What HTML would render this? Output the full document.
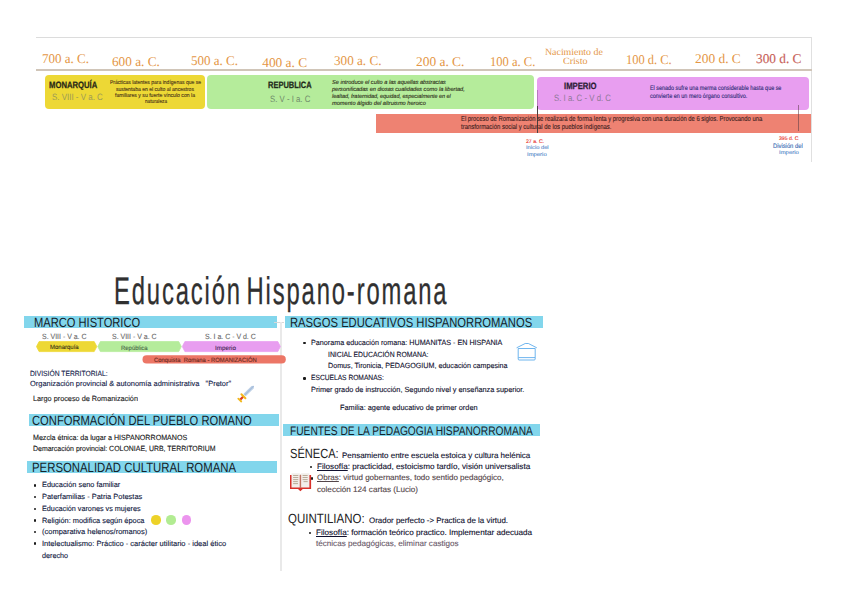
<!DOCTYPE html>
<html lang="es"><head><meta charset="utf-8"><title>Educación Hispano-romana</title>
<style>
html,body{margin:0;padding:0;background:#fff;}
body{width:848px;height:599px;position:relative;overflow:hidden;font-family:"Liberation Sans",sans-serif;color:#222;}
.a{position:absolute;}
.x{position:absolute;white-space:nowrap;transform-origin:0 0;text-rendering:geometricPrecision;}
.bl{position:absolute;width:2.4px;height:2.5px;background:#1a1a1a;border-radius:1px;}
</style></head><body>
<!-- timeline frame -->
<div class="a" style="left:36px;top:37px;width:776px;height:1px;background:#dcdcdc"></div>
<div class="a" style="left:811px;top:37px;width:1px;height:125px;background:#e0e0e0"></div>
<div class="a" style="left:36px;top:69px;width:776px;height:2px;background:#d0c5b8"></div>
<!-- period boxes -->
<div class="a" style="left:44.800px;top:75.200px;width:160px;height:33.600px;border-radius:4px;background:#edd835"></div>
<div class="a" style="left:207.200px;top:75.200px;width:326.800px;height:33.500px;border-radius:4px;background:#b5ec9b"></div>
<div class="a" style="left:536.700px;top:76.700px;width:272.700px;height:33px;border-radius:4px;background:#e89ef0"></div>
<div class="a" style="left:375.800px;top:113.800px;width:435.500px;height:18.800px;background:#ee8272"></div>
<div class="a" style="left:537px;top:90px;width:1px;height:16px;background:rgba(60,30,70,.28)"></div>
<div class="a" style="left:537px;top:106px;width:1px;height:26.500px;background:#4a4040"></div>
<div class="a" style="left:797.700px;top:105px;width:1px;height:26px;background:rgba(90,60,70,.55)"></div>

<!-- section bars -->
<div class="a" style="left:24px;top:316.200px;width:252.700px;height:11.800px;background:#82d6ec"></div>
<div class="a" style="left:29.200px;top:414.200px;width:249.500px;height:11.600px;background:#82d6ec"></div>
<div class="a" style="left:27px;top:461.200px;width:249.700px;height:11.600px;background:#82d6ec"></div>
<div class="a" style="left:285px;top:316.200px;width:257.500px;height:11.600px;background:#82d6ec"></div>
<div class="a" style="left:283.300px;top:424.200px;width:256.400px;height:11.600px;background:#82d6ec"></div>
<!-- divider -->
<div class="a" style="left:274px;top:321.500px;width:10px;height:1px;background:#d8d8d8"></div>
<div class="a" style="left:280.100px;top:321.500px;width:2.100px;height:249px;background:#e9e9e9"></div>

<!-- chevrons -->
<svg class="a" style="left:30px;top:338px" width="262" height="30" viewBox="30 338 262 30">
<path d="M39.1 341.6 H94.2 L96.8 346.6 L94.2 351.6 H39.1 L36.5 346.6Z" fill="#edd835" stroke="#edd835" stroke-width=".8" stroke-linejoin="round"/>
<path d="M100.4 341.6 H178.7 L181.3 346.6 L178.7 351.6 H100.4 L97.8 346.6Z" fill="#b5ec9b" stroke="#b5ec9b" stroke-width=".8" stroke-linejoin="round"/>
<path d="M184.9 341.6 H277.8 L280.4 346.6 L277.8 351.6 H184.9 L182.3 346.6Z" fill="#e89ef0" stroke="#e89ef0" stroke-width=".8" stroke-linejoin="round"/>
<rect x="142.500" y="355.300" width="143.300" height="8.200" rx="4.100" fill="#ec7666"/>
</svg>

<!-- sword -->
<svg class="a" style="left:234px;top:382px" width="24" height="23" viewBox="234 382 24 23">
<path d="M243.300 394 L251.500 386 L253.900 385.700 L253.900 388.200 L245.700 396.300Z" fill="#bccfe6"/>
<path d="M244.500 395.200 L253.600 386" stroke="#94aed0" stroke-width=".8"/>
<path d="M243.600 396.300 L239.900 400" stroke="#dc3a22" stroke-width="2.300"/>
<path d="M241.400 394.300 L245.400 398.300" stroke="#f2b81e" stroke-width="2" stroke-linecap="round"/>
<path d="M238.300 398.700 L241.300 401.500" stroke="#f2b81e" stroke-width="1.800" stroke-linecap="round"/>
</svg>

<!-- dots -->
<div class="a" style="left:150.800px;top:515.300px;width:10.500px;height:9.400px;border-radius:50%;background:#edd228"></div>
<div class="a" style="left:166.200px;top:515.300px;width:10.200px;height:9.400px;border-radius:50%;background:#b2ec92"></div>
<div class="a" style="left:182px;top:515.300px;width:9.400px;height:9.400px;border-radius:50%;background:#ec94ee"></div>

<!-- bullets -->
<div class="bl" style="left:33.900px;top:484px"></div>
<div class="bl" style="left:33.900px;top:495.600px"></div>
<div class="bl" style="left:33.900px;top:507.500px"></div>
<div class="bl" style="left:33.900px;top:519px"></div>
<div class="bl" style="left:33.900px;top:530.800px"></div>
<div class="bl" style="left:33.900px;top:542.300px"></div>
<div class="bl" style="left:303.300px;top:341.800px"></div>
<div class="bl" style="left:303.300px;top:377px"></div>
<div class="bl" style="left:309.600px;top:465.800px"></div>
<div class="bl" style="left:309px;top:531.800px"></div>
<div class="bl" style="left:310.600px;top:477px"></div>

<!-- house -->
<svg class="a" style="left:515px;top:341px" width="24" height="21" viewBox="515 341 24 21">
<path d="M516.600 347.800 L525.200 343.500 H528.400 L536.800 347.800 M518.200 348.500 V359 Q518.200 360 519.200 360 H534.200 Q535.200 360 535.200 359 V348.500 M518.200 348.500 H535.200 M518.500 357.600 H535" fill="none" stroke="#4aa2ea" stroke-width=".8"/>
</svg>

<!-- book -->
<svg class="a" style="left:288px;top:471px" width="26" height="22" viewBox="288 471 26 22">
<path d="M290 474.900 H311.100 V489 H302.800 L300.400 491.300 L298 489 H290Z" fill="#d8302a"/>
<path d="M291.500 473.200 H299.800 V487.400 H291.500Z M301.100 473.200 H309.400 V487.400 H301.100Z" fill="#f2eeea"/>
<path d="M300.450 474.500 V488" stroke="#b09a80" stroke-width=".7"/>
<path d="M293.100 475.500H298.300M293.100 477.500H298.300M293.100 479.600H298.300M293.100 481.600H297.800M293.100 483.600H298M302.600 475.500H307.700M302.600 477.500H307.700M302.600 479.600H307.700M303.500 481.600H307.700" stroke="#b4a48e" stroke-width=".9"/>
</svg>

<div class="x" style="left:41.7px;top:50px;font-size:13.4px;line-height:17px;color:#e49645;font-family:'Liberation Serif',serif;transform:scaleX(0.972);">700 a. C.</div>
<div class="x" style="left:112.2px;top:53px;font-size:13.4px;line-height:17px;color:#e49645;font-family:'Liberation Serif',serif;transform:scaleX(0.988);">600 a. C.</div>
<div class="x" style="left:190.8px;top:52px;font-size:13.4px;line-height:17px;color:#e49645;font-family:'Liberation Serif',serif;transform:scaleX(0.972);">500 a. C.</div>
<div class="x" style="left:262.2px;top:54px;font-size:13.4px;line-height:17px;color:#e49645;font-family:'Liberation Serif',serif;transform:scaleX(1.000);">400 a. C</div>
<div class="x" style="left:334.2px;top:52px;font-size:13.4px;line-height:17px;color:#e49645;font-family:'Liberation Serif',serif;transform:scaleX(0.982);">300 a. C.</div>
<div class="x" style="left:415.8px;top:53px;font-size:13.4px;line-height:17px;color:#e49645;font-family:'Liberation Serif',serif;transform:scaleX(1.001);">200 a. C.</div>
<div class="x" style="left:489.7px;top:53px;font-size:13.4px;line-height:17px;color:#e49645;font-family:'Liberation Serif',serif;transform:scaleX(0.937);">100 a. C.</div>
<div class="x" style="left:544.7px;top:46px;font-size:9.6px;line-height:13px;color:#e49645;font-family:'Liberation Serif',serif;transform:scaleX(1.028);">Nacimiento de</div>
<div class="x" style="left:562.5px;top:55px;font-size:9.6px;line-height:13px;color:#e49645;font-family:'Liberation Serif',serif;transform:scaleX(1.044);">Cristo</div>
<div class="x" style="left:626.3px;top:51px;font-size:13.4px;line-height:17px;color:#e49645;font-family:'Liberation Serif',serif;transform:scaleX(0.931);">100 d. C.</div>
<div class="x" style="left:694.7px;top:50px;font-size:13.4px;line-height:17px;color:#e49645;font-family:'Liberation Serif',serif;transform:scaleX(1.001);">200 d. C</div>
<div class="x" style="left:755.8px;top:50px;font-size:13.4px;line-height:17px;color:#c8625a;font-family:'Liberation Serif',serif;transform:scaleX(0.994);-webkit-text-stroke:.15px;">300 d. C</div>
<div class="x" style="left:49.2px;top:79px;font-size:9.2px;line-height:13px;color:#2a2a18;font-weight:bold;transform:scaleX(0.837);-webkit-text-stroke:.25px;">MONARQUÍA</div>
<div class="x" style="left:52.0px;top:91px;font-size:9.2px;line-height:13px;color:#9c9a58;transform:scaleX(0.865);">S. VIII - V a. C</div>
<div class="x" style="left:268.3px;top:79px;font-size:9.2px;line-height:13px;color:#1f2a1a;font-weight:bold;transform:scaleX(0.815);-webkit-text-stroke:.25px;">REPUBLICA</div>
<div class="x" style="left:269.7px;top:93px;font-size:9.2px;line-height:13px;color:#6f8a6a;transform:scaleX(0.849);">S. V - I a. C</div>
<div class="x" style="left:563.8px;top:80px;font-size:9.2px;line-height:13px;color:#2c1c36;font-weight:bold;transform:scaleX(0.838);-webkit-text-stroke:.25px;">IMPERIO</div>
<div class="x" style="left:553.8px;top:92px;font-size:9.2px;line-height:13px;color:#8e7896;transform:scaleX(0.852);">S. I a. C - V d. C</div>
<div class="x" style="-webkit-text-stroke:.12px;left:109.6px;top:79px;font-size:5.6px;line-height:9px;color:#4a3418;transform:scaleX(0.901);">Prácticas latentes para indígenas que se</div>
<div class="x" style="-webkit-text-stroke:.12px;left:116.0px;top:86px;font-size:5.6px;line-height:9px;color:#4a3418;transform:scaleX(0.905);">sustentaba en el culto al ancestros</div>
<div class="x" style="-webkit-text-stroke:.12px;left:115.0px;top:92px;font-size:5.6px;line-height:9px;color:#4a3418;transform:scaleX(0.916);">familiares y su fuerte vínculo con la</div>
<div class="x" style="-webkit-text-stroke:.12px;left:144.5px;top:98px;font-size:5.6px;line-height:9px;color:#4a3418;transform:scaleX(0.842);">naturaleza</div>
<div class="x" style="-webkit-text-stroke:.12px;left:332.2px;top:79px;font-size:5.8px;line-height:9px;color:#2c2c18;transform:scaleX(0.965);font-style:italic;">Se introduce el culto a las aquellas abstractas</div>
<div class="x" style="-webkit-text-stroke:.12px;left:332.2px;top:86px;font-size:5.8px;line-height:9px;color:#2c2c18;transform:scaleX(0.967);font-style:italic;">personificadas en diosas cualidades como la libertad,</div>
<div class="x" style="-webkit-text-stroke:.12px;left:332.2px;top:93px;font-size:5.8px;line-height:9px;color:#2c2c18;transform:scaleX(0.938);font-style:italic;">lealtad, fraternidad, equidad, especialmente en el</div>
<div class="x" style="-webkit-text-stroke:.12px;left:332.2px;top:100px;font-size:5.8px;line-height:9px;color:#2c2c18;transform:scaleX(0.974);font-style:italic;">momento álgido del altruismo heroico</div>
<div class="x" style="-webkit-text-stroke:.12px;left:650.3px;top:84px;font-size:6.5px;line-height:10px;color:#2c2a74;transform:scaleX(0.834);">El senado sufre una merma considerable hasta que se</div>
<div class="x" style="-webkit-text-stroke:.12px;left:650.3px;top:92px;font-size:6.5px;line-height:10px;color:#2c2a74;transform:scaleX(0.841);">convierte en un mero órgano consultivo.</div>
<div class="x" style="-webkit-text-stroke:.12px;left:460.8px;top:113px;font-size:7.2px;line-height:11px;color:#3c2020;transform:scaleX(0.815);">El proceso de Romanización se realizará de forma lenta y progresiva con una duración de 6 siglos. Provocando una</div>
<div class="x" style="-webkit-text-stroke:.12px;left:460.8px;top:121px;font-size:7.2px;line-height:11px;color:#3c2020;transform:scaleX(0.826);">transformación social y cultural de los pueblos indígenas.</div>
<div class="x" style="-webkit-text-stroke:.12px;left:526.3px;top:138px;font-size:5.2px;line-height:8px;color:#e8332a;transform:scaleX(0.996);">27 a. C.</div>
<div class="x" style="-webkit-text-stroke:.12px;left:526.3px;top:144px;font-size:5.2px;line-height:8px;color:#5a8ccc;transform:scaleX(1.103);">Inicio del</div>
<div class="x" style="-webkit-text-stroke:.12px;left:526.5px;top:151px;font-size:5.2px;line-height:8px;color:#5a8ccc;transform:scaleX(1.138);">Imperio</div>
<div class="x" style="-webkit-text-stroke:.12px;left:778.8px;top:135px;font-size:5.2px;line-height:8px;color:#e8332a;transform:scaleX(0.989);">395 d. C</div>
<div class="x" style="-webkit-text-stroke:.12px;left:773.4px;top:142px;font-size:6.4px;line-height:10px;color:#3a6cb4;transform:scaleX(0.909);">División del</div>
<div class="x" style="-webkit-text-stroke:.12px;left:778.8px;top:149px;font-size:5.2px;line-height:8px;color:#5a8ccc;transform:scaleX(1.144);">Imperio</div>
<div class="x" style="left:113.7px;top:269px;font-size:38.6px;line-height:46px;color:#303030;transform:scaleX(0.617);letter-spacing:3px;word-spacing:-6px;-webkit-text-stroke:.3px #303030;">Educación Hispano-romana</div>
<div class="x" style="left:34.2px;top:314px;font-size:13.4px;line-height:17px;color:#15222a;transform:scaleX(0.831);">MARCO HISTORICO</div>
<div class="x" style="left:32.2px;top:412px;font-size:13.4px;line-height:17px;color:#15222a;transform:scaleX(0.836);">CONFORMACIÓN DEL PUEBLO ROMANO</div>
<div class="x" style="left:31.8px;top:459px;font-size:13.4px;line-height:17px;color:#15222a;transform:scaleX(0.849);">PERSONALIDAD CULTURAL ROMANA</div>
<div class="x" style="left:290.0px;top:314px;font-size:13.4px;line-height:17px;color:#15222a;transform:scaleX(0.838);">RASGOS EDUCATIVOS HISPANORROMANOS</div>
<div class="x" style="left:289.6px;top:423px;font-size:12.4px;line-height:16px;color:#15222a;transform:scaleX(0.823);">FUENTES DE LA PEDAGOGIA HISPANORROMANA</div>
<div class="x" style="left:289.6px;top:445px;font-size:13.3px;line-height:17px;color:#222;transform:scaleX(0.834);">SÉNECA:</div>
<div class="x" style="left:288.3px;top:510px;font-size:13.3px;line-height:17px;color:#222;transform:scaleX(0.865);">QUINTILIANO:</div>
<div class="x" style="-webkit-text-stroke:.12px;left:41.7px;top:331px;font-size:7.5px;line-height:11px;color:#6a6a6a;transform:scaleX(0.928);">S. VIII - V a. C</div>
<div class="x" style="-webkit-text-stroke:.12px;left:111.7px;top:331px;font-size:7.5px;line-height:11px;color:#6a6a6a;transform:scaleX(0.930);">S. VIII - V a. C</div>
<div class="x" style="-webkit-text-stroke:.12px;left:205.0px;top:331px;font-size:7.5px;line-height:11px;color:#6a6a6a;transform:scaleX(0.930);">S. I a. C - V d. C</div>
<div class="x" style="-webkit-text-stroke:.12px;left:50.0px;top:343px;font-size:6.2px;line-height:9px;color:#3a3418;transform:scaleX(0.970);">Monarquía</div>
<div class="x" style="-webkit-text-stroke:.12px;left:120.5px;top:344px;font-size:6.2px;line-height:9px;color:#4a6a4a;transform:scaleX(0.963);">República</div>
<div class="x" style="-webkit-text-stroke:.12px;left:215.0px;top:344px;font-size:6.2px;line-height:9px;color:#4a2a5a;transform:scaleX(1.017);">Imperio</div>
<div class="x" style="-webkit-text-stroke:.12px;left:154.0px;top:356px;font-size:6.2px;line-height:9px;color:#6a2a22;transform:scaleX(0.948);">Conquista&nbsp; Romana - ROMANIZACIÓN</div>
<div class="x" style="-webkit-text-stroke:.12px;left:30.0px;top:368px;font-size:7.5px;line-height:11px;color:#141c4a;transform:scaleX(0.897);">DIVISIÓN TERRITORIAL:</div>
<div class="x" style="-webkit-text-stroke:.12px;left:30.0px;top:378px;font-size:7.5px;line-height:11px;color:#141c4a;transform:scaleX(0.991);">Organización provincial &amp; autonomía administrativa&nbsp; &nbsp;"Pretor"</div>
<div class="x" style="-webkit-text-stroke:.12px;left:33.0px;top:393px;font-size:7.5px;line-height:11px;color:#222;transform:scaleX(0.972);">Largo proceso de Romanización</div>
<div class="x" style="-webkit-text-stroke:.12px;left:33.3px;top:432px;font-size:7.5px;line-height:11px;color:#161616;transform:scaleX(0.947);">Mezcla étnica: da lugar a HISPANORROMANOS</div>
<div class="x" style="-webkit-text-stroke:.12px;left:33.3px;top:443px;font-size:7.5px;line-height:11px;color:#161616;transform:scaleX(0.927);">Demarcación provincial: COLONIAE, URB, TERRITORIUM</div>
<div class="x" style="-webkit-text-stroke:.12px;left:41.7px;top:479px;font-size:7.5px;line-height:11px;color:#10183e;transform:scaleX(0.983);">Educación seno familiar</div>
<div class="x" style="-webkit-text-stroke:.12px;left:41.7px;top:491px;font-size:7.5px;line-height:11px;color:#10183e;transform:scaleX(0.994);">Paterfamilias - Patria Potestas</div>
<div class="x" style="-webkit-text-stroke:.12px;left:41.7px;top:503px;font-size:7.5px;line-height:11px;color:#10183e;transform:scaleX(0.965);">Educación varones vs mujeres</div>
<div class="x" style="-webkit-text-stroke:.12px;left:41.7px;top:515px;font-size:7.5px;line-height:11px;color:#10183e;transform:scaleX(0.983);">Religión: modifica según época</div>
<div class="x" style="-webkit-text-stroke:.12px;left:41.7px;top:526px;font-size:7.5px;line-height:11px;color:#10183e;transform:scaleX(0.998);">(comparativa helenos/romanos)</div>
<div class="x" style="-webkit-text-stroke:.12px;left:41.7px;top:538px;font-size:7.5px;line-height:11px;color:#10183e;transform:scaleX(1.004);">Intelectualismo: Práctico - carácter utilitario - ideal ético</div>
<div class="x" style="-webkit-text-stroke:.12px;left:42.0px;top:550px;font-size:7.5px;line-height:11px;color:#10183e;transform:scaleX(0.959);">derecho</div>
<div class="x" style="-webkit-text-stroke:.12px;left:310.8px;top:337px;font-size:7.5px;line-height:11px;color:#10102e;transform:scaleX(0.958);">Panorama educación romana: HUMANITAS - EN HISPANIA</div>
<div class="x" style="-webkit-text-stroke:.12px;left:328.0px;top:349px;font-size:7.5px;line-height:11px;color:#10102e;transform:scaleX(0.911);">INICIAL EDUCACIÓN ROMANA:</div>
<div class="x" style="-webkit-text-stroke:.12px;left:328.0px;top:360px;font-size:7.5px;line-height:11px;color:#10102e;transform:scaleX(0.953);">Domus, Tironicia, PEDAGOGIUM, educación campesina</div>
<div class="x" style="-webkit-text-stroke:.12px;left:310.8px;top:372px;font-size:7.5px;line-height:11px;color:#10102e;transform:scaleX(0.888);">ESCUELAS ROMANAS:</div>
<div class="x" style="-webkit-text-stroke:.12px;left:310.8px;top:384px;font-size:7.5px;line-height:11px;color:#10102e;transform:scaleX(0.975);">Primer grado de instrucción, Segundo nivel y enseñanza superior.</div>
<div class="x" style="-webkit-text-stroke:.12px;left:340.0px;top:402px;font-size:7.5px;line-height:11px;color:#10102e;transform:scaleX(0.979);">Familia: agente educativo de primer orden</div>
<div class="x" style="-webkit-text-stroke:.12px;left:342.0px;top:450px;font-size:7.9px;line-height:11px;color:#10102e;transform:scaleX(1.010);">Pensamiento entre escuela estoica y cultura helénica</div>
<div class="x" style="-webkit-text-stroke:.12px;left:317.0px;top:461px;font-size:7.9px;line-height:11px;color:#10102e;transform:scaleX(1.030);"><u>Filosofía</u>: practicidad, estoicismo tardío, visión universalista</div>
<div class="x" style="-webkit-text-stroke:.12px;left:317.0px;top:472px;font-size:7.9px;line-height:11px;color:#54464a;transform:scaleX(1.016);"><u>Obras</u>: virtud gobernantes, todo sentido pedagógico,</div>
<div class="x" style="-webkit-text-stroke:.12px;left:317.0px;top:484px;font-size:7.9px;line-height:11px;color:#54464a;transform:scaleX(1.028);">colección 124 cartas (Lucio)</div>
<div class="x" style="-webkit-text-stroke:.12px;left:369.2px;top:515px;font-size:7.9px;line-height:11px;color:#10102e;transform:scaleX(1.005);">Orador perfecto -&gt; Practica de la virtud.</div>
<div class="x" style="-webkit-text-stroke:.12px;left:315.8px;top:527px;font-size:7.9px;line-height:11px;color:#10102e;transform:scaleX(1.031);"><u>Filosofía</u>: formación teórico practico. Implementar adecuada</div>
<div class="x" style="-webkit-text-stroke:.12px;left:315.8px;top:538px;font-size:7.9px;line-height:11px;color:#6a5a6a;transform:scaleX(1.025);">técnicas pedagógicas, eliminar castigos</div>
</body></html>
